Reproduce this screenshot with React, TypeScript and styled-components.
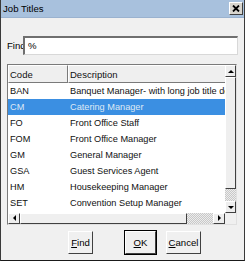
import React from 'react'
import styled, { createGlobalStyle } from 'styled-components'

const GlobalStyle = createGlobalStyle`
  html, body {
    margin: 0;
    padding: 0;
    background: #ffffff;
  }
  body {
    font-family: "Liberation Sans", Arial, sans-serif;
    font-size: 9.4px;
    color: #000;
  }
`

const rows = [
  { code: 'BAN', desc: 'Banquet Manager- with long job title description' },
  { code: 'CM', desc: 'Catering Manager' },
  { code: 'FO', desc: 'Front Office Staff' },
  { code: 'FOM', desc: 'Front Office Manager' },
  { code: 'GM', desc: 'General Manager' },
  { code: 'GSA', desc: 'Guest Services Agent' },
  { code: 'HM', desc: 'Housekeeping Manager' },
  { code: 'SET', desc: 'Convention Setup Manager' },
]

const Arrow: React.FC<{ dir: 'up' | 'down' | 'left' | 'right' }> = ({ dir }) => {
  const pts = {
    up: '1,4 4,1 7,4',
    down: '1,1 4,4 7,1',
    left: '4,0 1,3 4,6',
    right: '1,0 4,3 1,6',
  }[dir]
  const vertical = dir === 'up' || dir === 'down'
  return (
    <svg width={vertical ? 8 : 5} height={vertical ? 5 : 7} viewBox={vertical ? '0 0 8 5' : '0 0 5 7'}>
      <polygon points={pts} fill="#000" />
    </svg>
  )
}

const App: React.FC = () => {
  return (
    <>
      <GlobalStyle />
      <Window>
        <TitleBar>
          <Title>Job Titles</Title>
          <CloseButton>
            <svg width="8" height="7" viewBox="0 0 8 7">
              <path d="M1 0.5 L7 6.5 M7 0.5 L1 6.5" stroke="#000" strokeWidth="1.8" />
            </svg>
          </CloseButton>
        </TitleBar>
        <Body>
          <FindRow>
            <FindLabel>Find</FindLabel>
            <FindInput>%</FindInput>
          </FindRow>
          <ListBox>
            <ListMain>
              <ListInner>
                <HeaderRow>
                  <HeaderCell $width={60}>Code</HeaderCell>
                  <HeaderCell $width={200}>Description</HeaderCell>
                </HeaderRow>
                {rows.map((r) => (
                  <Row key={r.code} $selected={r.code === 'CM'}>
                    <Cell $width={60}>{r.code}</Cell>
                    <Cell $width={200}>{r.desc}</Cell>
                  </Row>
                ))}
              </ListInner>
              <VScroll>
                <ScrollButton $size="v">
                  <Arrow dir="up" />
                </ScrollButton>
                <VThumb />
                <Trough />
                <ScrollButton $size="v">
                  <Arrow dir="down" />
                </ScrollButton>
              </VScroll>
            </ListMain>
            <HScrollRow>
              <HScroll>
                <ScrollButton $size="h">
                  <Arrow dir="left" />
                </ScrollButton>
                <HThumb />
                <Trough />
                <ScrollButton $size="h">
                  <Arrow dir="right" />
                </ScrollButton>
              </HScroll>
              <Corner />
            </HScrollRow>
          </ListBox>
          <ButtonRow>
            <DialogButton $width={25}>
              <u>F</u>ind
            </DialogButton>
            <ButtonGroup>
              <DialogButton $width={31} $default>
                <u>O</u>K
              </DialogButton>
              <DialogButton $width={35}>
                <u>C</u>ancel
              </DialogButton>
            </ButtonGroup>
          </ButtonRow>
        </Body>
      </Window>
    </>
  )
}

const Window = styled.div`
  width: 245px;
  height: 261px;
  box-sizing: border-box;
  border-left: 1px solid #3a3a3a;
  border-right: 1px solid #3a3a3a;
  border-bottom: 1px solid #1a1a1a;
  background: #f0f0f0;
  display: flex;
  flex-direction: column;
  overflow: hidden;
`

const TitleBar = styled.div`
  height: 17px;
  background: #a8c1dd;
  display: flex;
  align-items: center;
  justify-content: space-between;
  padding: 0 1px 0 2px;
  border-bottom: 1px solid #9ab2cf;
`

const Title = styled.span`
  font-size: 9.6px;
  color: #000;
`

const CloseButton = styled.div`
  width: 12px;
  height: 11px;
  background: #d8d5ce;
  border-top: 1px solid #fff;
  border-left: 1px solid #fff;
  border-right: 1px solid #404040;
  border-bottom: 1px solid #404040;
  display: flex;
  align-items: center;
  justify-content: center;
`

const Body = styled.div`
  flex: 1;
  display: flex;
  flex-direction: column;
  padding: 18px 6px 0 6px;
`

const FindRow = styled.div`
  display: flex;
  align-items: center;
  height: 19px;
`

const FindLabel = styled.span`
  font-size: 9.6px;
  width: 16px;
  padding-left: 0px;
`

const FindInput = styled.div`
  flex: 1;
  height: 19px;
  box-sizing: border-box;
  background: #fff;
  border-top: 2px solid #6f6f6f;
  border-left: 2px solid #6f6f6f;
  border-right: 1px solid #d8d8d8;
  border-bottom: 1px solid #d8d8d8;
  padding: 2px 3px;
  font-size: 9.6px;
`

const ListBox = styled.div`
  margin-top: 9px;
  margin-right: 1px;
  height: 161px;
  box-sizing: border-box;
  border-top: 1px solid #7a7a7a;
  border-left: 1px solid #7a7a7a;
  border-right: 1px solid #e0e0e0;
  border-bottom: 1px solid #e0e0e0;
  background: #fff;
  display: flex;
  flex-direction: column;
`

const ListMain = styled.div`
  flex: 1;
  display: flex;
  min-height: 0;
`

const ListInner = styled.div`
  flex: 1;
  overflow: hidden;
`

const HeaderRow = styled.div`
  display: flex;
  height: 18px;
  white-space: nowrap;
`

const HeaderCell = styled.div<{ $width: number }>`
  flex: 0 0 ${(p) => p.$width}px;
  box-sizing: border-box;
  background: #efefef;
  border-top: 1px solid #fff;
  border-left: 1px solid #fff;
  border-right: 1px solid #7a7a7a;
  border-bottom: 1px solid #7a7a7a;
  padding: 3px 1px 0 1px;
  font-size: 9.5px;
  color: #111;
`

const Row = styled.div<{ $selected?: boolean }>`
  display: flex;
  height: 16px;
  align-items: center;
  white-space: nowrap;
  background: ${(p) => (p.$selected ? '#3b8fe2' : '#fff')};
  color: ${(p) => (p.$selected ? '#dfe9f5' : '#111')};
`

const Cell = styled.div<{ $width: number }>`
  flex: 0 0 ${(p) => p.$width}px;
  box-sizing: border-box;
  padding-left: 2px;
  font-size: 9.2px;
`

const VScroll = styled.div`
  width: 11px;
  display: flex;
  flex-direction: column;
  background: #f0f0f0;
`

const ScrollButton = styled.div<{ $size: 'v' | 'h' }>`
  width: ${(p) => (p.$size === 'v' ? '11px' : '12px')};
  height: ${(p) => (p.$size === 'v' ? '12px' : '11px')};
  flex: 0 0 auto;
  box-sizing: border-box;
  background: #eeeeee;
  border-top: 1px solid #fff;
  border-left: 1px solid #fff;
  border-right: 1px solid #404040;
  border-bottom: 1px solid #404040;
  display: flex;
  align-items: center;
  justify-content: center;
`

const VThumb = styled.div`
  flex: 0 0 112px;
  box-sizing: border-box;
  background: #efefef;
  border-top: 1px solid #fff;
  border-left: 1px solid #fff;
  border-right: 1px solid #404040;
  border-bottom: 1px solid #404040;
`

const Trough = styled.div`
  flex: 1;
  background-color: #d6d6d6;
  background-image: repeating-conic-gradient(#c8c8c8 0% 25%, #ececec 0% 50%);
  background-size: 2px 2px;
`

const HScrollRow = styled.div`
  display: flex;
  height: 11px;
`

const HScroll = styled.div`
  flex: 1;
  display: flex;
`

const HThumb = styled.div`
  flex: 0 0 167px;
  box-sizing: border-box;
  background: #efefef;
  border-top: 1px solid #fff;
  border-left: 1px solid #fff;
  border-right: 1px solid #404040;
  border-bottom: 1px solid #404040;
`

const Corner = styled.div`
  width: 11px;
  background: #f0f0f0;
`

const ButtonRow = styled.div`
  display: flex;
  align-items: center;
  gap: 32px;
  margin-top: 6px;
  padding-left: 61px;
`

const ButtonGroup = styled.div`
  display: flex;
  gap: 10px;
`

const DialogButton = styled.div<{ $width: number; $default?: boolean }>`
  width: ${(p) => p.$width}px;
  height: 23px;
  box-sizing: border-box;
  background: #f0f0f0;
  border-top: 1px solid #fff;
  border-left: 1px solid #fff;
  border-right: 1px solid #404040;
  border-bottom: 1px solid #404040;
  box-shadow: ${(p) => (p.$default ? '0 0 0 1px #000' : 'none')};
  display: flex;
  align-items: center;
  justify-content: center;
  font-size: 9.6px;
`

export default App
